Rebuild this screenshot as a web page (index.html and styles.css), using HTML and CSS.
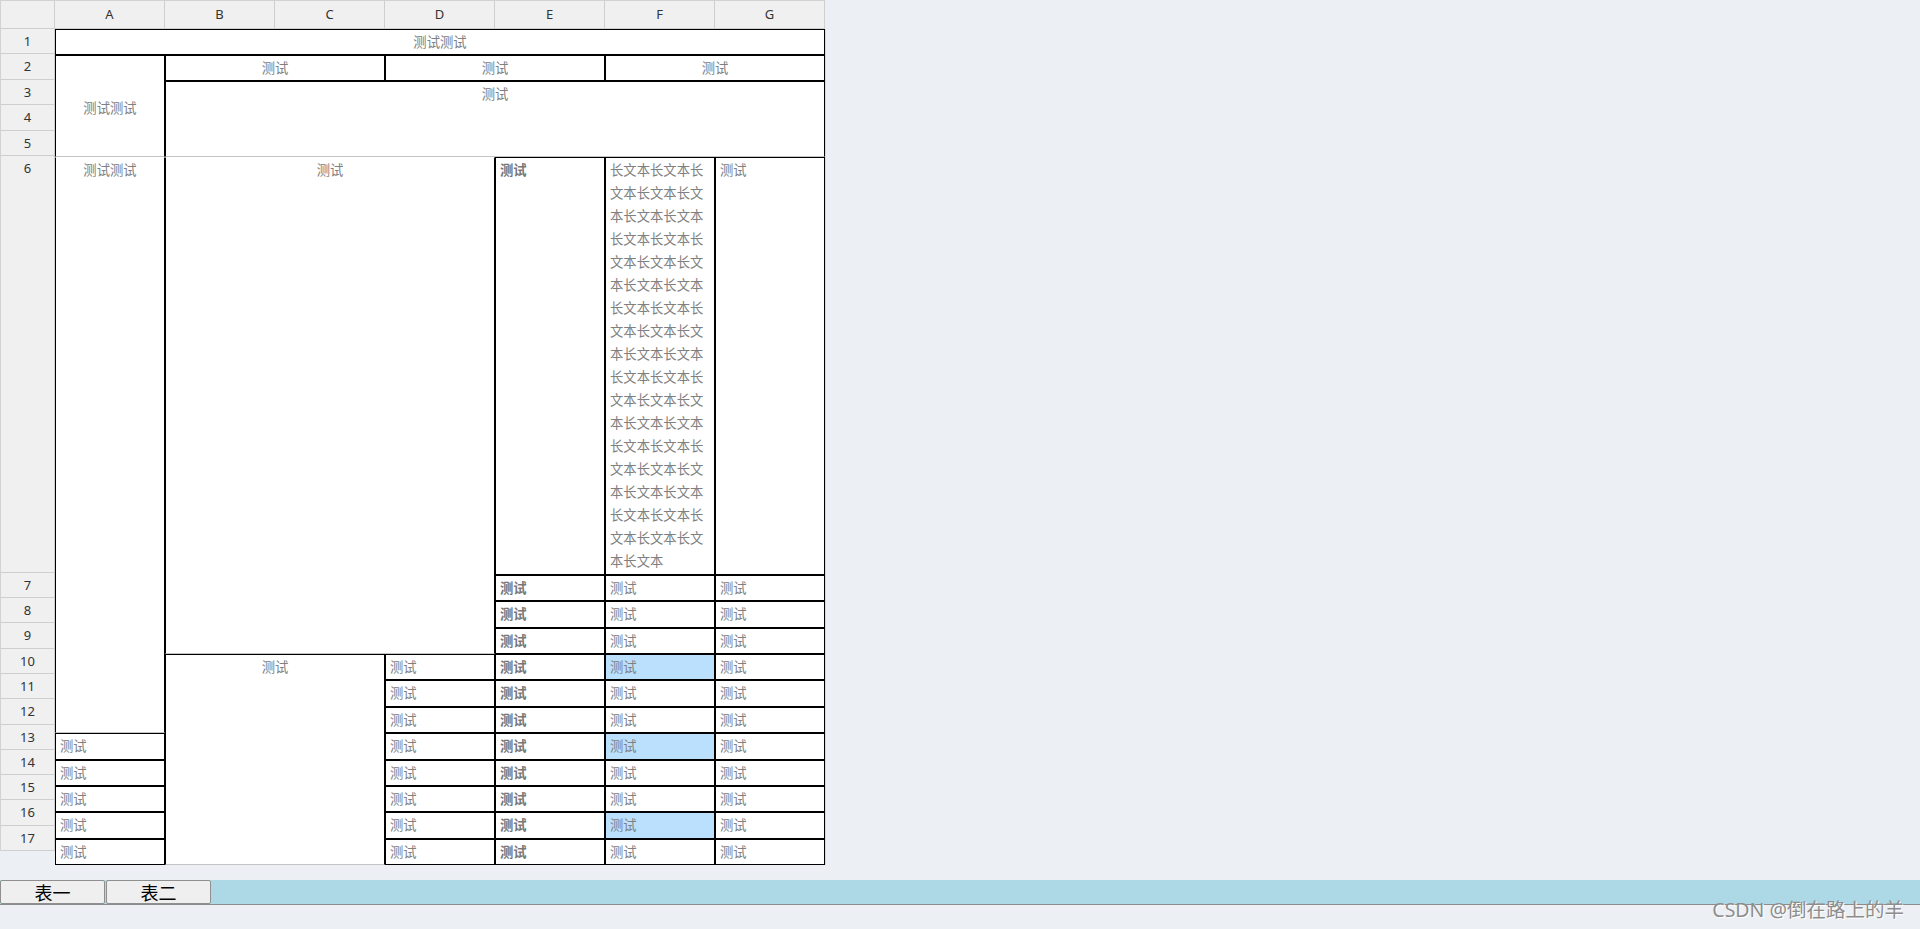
FILE: index.html
```html
<!DOCTYPE html>
<html lang="zh-CN">
<head>
<meta charset="utf-8">
<title>表格</title>
<link rel="stylesheet" href="styles.css">
</head>
<body>
<div class="sheet">
  <div class="col-head">
    <div class="corner"></div>
    <div class="ch">A</div>
    <div class="ch">B</div>
    <div class="ch">C</div>
    <div class="ch">D</div>
    <div class="ch">E</div>
    <div class="ch">F</div>
    <div class="ch">G</div>
  </div>
  <div class="body">
    <div class="row-head">
      <div class="rh top">1</div>
      <div class="rh top">2</div>
      <div class="rh top">3</div>
      <div class="rh top">4</div>
      <div class="rh top">5</div>
      <div class="rh tall">6</div>
      <div class="rh">7</div>
      <div class="rh">8</div>
      <div class="rh">9</div>
      <div class="rh">10</div>
      <div class="rh">11</div>
      <div class="rh">12</div>
      <div class="rh">13</div>
      <div class="rh">14</div>
      <div class="rh">15</div>
      <div class="rh">16</div>
      <div class="rh">17</div>
    </div>
    <div class="grid">
      <div class="c s7 ctr">测试测试</div>

      <div class="c r4 mid gb">测试测试</div>
      <div class="c s2 ctr">测试</div>
      <div class="c s2 ctr">测试</div>
      <div class="c s2 ctr">测试</div>

      <div class="c s6 r3 ctr gb">测试</div>

      <div class="c r7 ctr wt gb">测试测试</div>
      <div class="c s3 r4 ctr wt gb">测试</div>
      <div class="c b">测试</div>
      <div class="c long">长文本长文本长文本长文本长文本长文本长文本长文本长文本长文本长文本长文本长文本长文本长文本长文本长文本长文本长文本长文本长文本长文本长文本长文本长文本长文本长文本长文本长文本长文本长文本长文本长文本长文本长文本长文本长文本长文本长文本长文本长文本</div>
      <div class="c">测试</div>

      <div class="c b">测试</div><div class="c">测试</div><div class="c">测试</div>
      <div class="c b">测试</div><div class="c">测试</div><div class="c">测试</div>
      <div class="c b">测试</div><div class="c">测试</div><div class="c">测试</div>

      <div class="c s2 r8 ctr gb">测试</div>
      <div class="c">测试</div><div class="c b">测试</div><div class="c hl">测试</div><div class="c">测试</div>
      <div class="c">测试</div><div class="c b">测试</div><div class="c">测试</div><div class="c">测试</div>
      <div class="c">测试</div><div class="c b">测试</div><div class="c">测试</div><div class="c">测试</div>

      <div class="c">测试</div><div class="c">测试</div><div class="c b">测试</div><div class="c hl">测试</div><div class="c">测试</div>
      <div class="c">测试</div><div class="c">测试</div><div class="c b">测试</div><div class="c">测试</div><div class="c">测试</div>
      <div class="c">测试</div><div class="c">测试</div><div class="c b">测试</div><div class="c">测试</div><div class="c">测试</div>
      <div class="c">测试</div><div class="c">测试</div><div class="c b">测试</div><div class="c hl">测试</div><div class="c">测试</div>
      <div class="c">测试</div><div class="c">测试</div><div class="c b">测试</div><div class="c">测试</div><div class="c">测试</div>
    </div>
  </div>
</div>
<div class="tabs">
  <button class="tab">表一</button>
  <button class="tab">表二</button>
</div>
<div class="watermark">CSDN @倒在路上的羊</div>
</body>
</html>
```
FILE: styles.css
```css
html, body {
  margin: 0;
  padding: 0;
}
body {
  background: #ecf0f4;
  width: 1920px;
  height: 929px;
  position: relative;
  overflow: hidden;
  font-family: "Noto Sans", "Noto Sans CJK SC", sans-serif;
}
.sheet {
  display: flex;
  flex-direction: column;
  width: 826px;
}
.col-head {
  display: flex;
  height: 29px;
  box-sizing: border-box;
  border-top: 1px solid #d2d2d2;
  border-bottom: 1px solid #cfcfcf;
  background: #f0f0f0;
  width: 825px;
}
.corner {
  width: 55px;
  box-sizing: border-box;
  border-left: 1px solid #d2d2d2;
  border-right: 1px solid #cfcfcf;
}
.ch {
  width: 110px;
  box-sizing: border-box;
  border-right: 1px solid #cfcfcf;
  text-align: center;
  font-size: 13px;
  line-height: 27px;
  color: #333;
}
.body {
  display: flex;
  align-items: flex-start;
}
.row-head {
  width: 55px;
  display: flex;
  flex-direction: column;
  background: #f0f0f0;
  box-sizing: border-box;
  border-left: 1px solid #d2d2d2;
  border-right: 1px solid #cfcfcf;
}
.rh {
  height: 25.27px;
  box-sizing: border-box;
  border-bottom: 1px solid #cfcfcf;
  text-align: center;
  font-size: 13px;
  line-height: 24px;
  color: #333;
}
.rh.top { height: 25.4px; }
.rh.tall { height: 417px; }
.grid {
  display: grid;
  grid-template-columns: repeat(7, 110px);
  grid-template-rows: 26px 26px 25.33px 25.33px 25.34px 418px repeat(11, 26.3636px);
  border-right: 1px solid #d6dbe0;
  font-family: "Noto Sans CJK SC", sans-serif;
}
.c {
  box-sizing: border-box;
  border: 1px solid #000;
  background: #fff;
  padding: 0 4px;
  font-size: 13.33px;
  line-height: 23px;
  color: #808080;
  overflow: hidden;
}
.s2 { grid-column: span 2; }
.s3 { grid-column: span 3; }
.s6 { grid-column: span 6; }
.s7 { grid-column: span 7; }
.r3 { grid-row: span 3; }
.r4 { grid-row: span 4; }
.r7 { grid-row: span 7; }
.r8 { grid-row: span 8; }
.ctr { text-align: center; }
.mid {
  display: flex;
  align-items: center;
  justify-content: center;
  padding-top: 3px;
}
.b { font-weight: bold; color: #777; }
.gb { border-bottom-color: #c4c4c4; }
.wt { border-top-color: #fff; }
.hl { background: #bae0fd; }
.long { word-break: break-all; }
.tabs {
  display: flex;
  gap: 1px;
  margin-top: 15px;
  height: 25px;
  box-sizing: border-box;
  background: #add8e6;
  border-bottom: 1px solid #8c8c8c;
}
.tab {
  width: 105px;
  height: 24px;
  box-sizing: border-box;
  margin: 0;
  padding: 0;
  background: #efefef;
  border: 1px solid #8f8f8f;
  border-radius: 2px;
  font-family: "Noto Sans CJK SC", sans-serif;
  font-size: 18px;
  font-weight: 400;
  line-height: 22px;
  color: #000;
}
.watermark {
  position: absolute;
  right: 16px;
  bottom: 10px;
  font-family: "Noto Sans", "Noto Sans CJK SC", sans-serif;
  font-size: 19.5px;
  line-height: 19px;
  color: #8d8d8d;
  text-shadow: 1px 1px 0 #fff;
}
```
